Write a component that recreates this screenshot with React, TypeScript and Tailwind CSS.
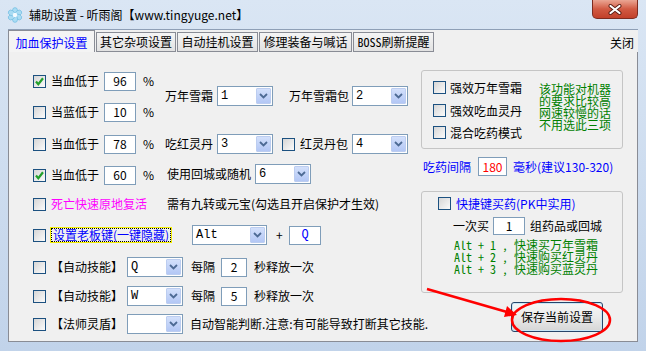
import * as React from "react";

// 小控件：复选框 / 文本框 / 下拉框，仿 Win7 经典样式
function CheckBox({ checked = false, className = "" }: { checked?: boolean; className?: string }) {
  return (
    <span
      className={`flex h-[13px] w-[13px] shrink-0 items-center justify-center border border-[#1c5180] bg-gradient-to-br from-[#d6d6d6] to-[#fbfbfb] ${className}`}
    >
      {checked && (
        <svg width="11" height="11" viewBox="0 0 11 11">
          <path d="M2 5.5 L4.3 8.2 L9 2.3" fill="none" stroke="#23a02c" strokeWidth="2.2" />
        </svg>
      )}
    </span>
  );
}

function TextBox({ children, className = "" }: { children?: React.ReactNode; className?: string }) {
  return (
    <span
      className={`flex shrink-0 items-center justify-center border border-[#7f9db9] bg-white leading-none ${className}`}
    >
      {children}
    </span>
  );
}

function Combo({ value = "", className = "" }: { value?: string; className?: string }) {
  return (
    <span
      className={`flex h-[20px] shrink-0 items-center justify-between border border-[#7f9db9] bg-white pl-[3px] pr-[1px] leading-none ${className}`}
    >
      <span className="font-['Liberation_Mono',monospace] text-[12px]">{value}</span>
      <span className="flex h-[16px] w-[15px] items-center justify-center rounded-[1px] border border-[#bccdf0] bg-gradient-to-b from-[#d3e0fb] to-[#b3c7f5]">
        <svg width="9" height="6" viewBox="0 0 9 6">
          <path d="M1 1 L4.5 4.5 L8 1" fill="none" stroke="#4d6a94" strokeWidth="1.8" />
        </svg>
      </span>
    </span>
  );
}

function TitleIcon() {
  return (
    <svg width="16" height="16" viewBox="0 0 16 16">
      {[0, 60, 120, 180, 240, 300].map((a) => (
        <ellipse
          key={a}
          cx="8"
          cy="4"
          rx="2.6"
          ry="3.4"
          fill="#a9dcf3"
          stroke="#6ab9e0"
          strokeWidth="0.6"
          transform={`rotate(${a} 8 8)`}
        />
      ))}
      <circle cx="8" cy="8" r="2.2" fill="#f4fbff" />
    </svg>
  );
}

function CloseBox() {
  return (
    <div className="ml-auto mr-[8px] flex h-[19px] w-[46px] items-center justify-center self-start rounded-b-[5px] border border-t-0 border-[#7d2c20] bg-gradient-to-b from-[#eaa593] via-[#d15a43] to-[#c2402a]">
      <svg width="14" height="11" viewBox="0 0 14 11">
        <path d="M2.5 2 L11.5 9 M11.5 2 L2.5 9" stroke="#5a1d14" strokeWidth="4" strokeLinecap="round" />
        <path d="M2.5 2 L11.5 9 M11.5 2 L2.5 9" stroke="#ffffff" strokeWidth="2.2" strokeLinecap="round" />
      </svg>
    </div>
  );
}

export default function App() {
  const row = "flex h-[20px] items-center whitespace-nowrap";
  const mono = "font-['Noto_Sans_Mono_CJK_SC','Liberation_Mono',monospace]";

  return (
    <div className="relative h-[351px] w-[646px] overflow-hidden bg-gradient-to-b from-[#dae6f4] to-[#c1d3ea] font-['Noto_Sans_CJK_SC','Liberation_Sans',sans-serif] text-[12px] leading-[14px] text-black">
      {/* 标题栏 */}
      <div className="flex h-[29px] items-center pl-[7px]">
        <TitleIcon />
        <span className="ml-[6px]">辅助设置 - 听雨阁【www.tingyuge.net】</span>
        <CloseBox />
      </div>

      {/* 客户区 */}
      <div className="ml-[8px] flex h-[313px] w-[630px] flex-col border-t border-[#8e9fb6] bg-[#f0f0f0]">
        {/* 选项卡 */}
        <div className="flex h-[22px] items-end">
          <div className="flex h-[22px] w-[87px] items-center justify-center border-x border-t border-[#898c95] bg-[#f4f4f4] pt-[2px] text-[#0000ff]">
            加血保护设置
          </div>
          {[
            ["其它杂项设置", "w-[80px]"],
            ["自动挂机设置", "w-[81px]"],
            ["修理装备与喊话", "w-[93px]"],
          ].map(([t, w]) => (
            <div
              key={t}
              className={`ml-[1px] flex h-[20px] items-center justify-center border border-[#898c95] bg-gradient-to-b from-[#f5f5f5] to-[#e2e2e2] ${w}`}
            >
              {t}
            </div>
          ))}
          <div
            className={`ml-[1px] flex h-[20px] w-[81px] items-center justify-center border border-[#898c95] bg-gradient-to-b from-[#f5f5f5] to-[#e2e2e2] ${mono}`}
          >
            BOSS刷新提醒
          </div>
          <div className="flex h-full flex-1 items-center justify-end pr-[4px] pt-[4px]">关闭</div>
        </div>

        {/* 选项卡内容 */}
        <div className="flex flex-1 border-x border-b border-[#898c95]">
          {/* 左侧 */}
          <div className="flex w-[412px] shrink-0 flex-col pl-[24px] pt-[19px]">
            <div className="flex">
              <div className="flex w-[132px] shrink-0 flex-col">
                <div className={row}>
                  <CheckBox checked />
                  <span className="ml-[5px] w-[48px]">当血低于</span>
                  <TextBox className="ml-[5px] h-[19px] w-[32px]">96</TextBox>
                  <span className="ml-[7px]">%</span>
                </div>
                <div className={`${row} mt-[11px]`}>
                  <CheckBox />
                  <span className="ml-[5px] w-[48px]">当蓝低于</span>
                  <TextBox className="ml-[5px] h-[19px] w-[32px]">10</TextBox>
                  <span className="ml-[7px]">%</span>
                </div>
                <div className={`${row} mt-[12px]`}>
                  <CheckBox />
                  <span className="ml-[5px] w-[48px]">当血低于</span>
                  <TextBox className="ml-[5px] h-[19px] w-[32px]">78</TextBox>
                  <span className="ml-[7px]">%</span>
                </div>
                <div className={`${row} mt-[11px]`}>
                  <CheckBox checked />
                  <span className="ml-[5px] w-[48px]">当血低于</span>
                  <TextBox className="ml-[5px] h-[19px] w-[32px]">60</TextBox>
                  <span className="ml-[7px]">%</span>
                </div>
              </div>

              <div className="flex flex-col">
                <div className={`${row} mt-[15px]`}>
                  <span className="w-[48px]">万年雪霜</span>
                  <Combo value="1" className="ml-[4px] w-[56px]" />
                  <span className="ml-[16px] w-[60px]">万年雪霜包</span>
                  <Combo value="2" className="ml-[3px] w-[56px]" />
                </div>
                <div className={`${row} mt-[28px]`}>
                  <span className="w-[48px]">吃红灵丹</span>
                  <Combo value="3" className="ml-[4px] w-[56px]" />
                  <CheckBox className="ml-[9px]" />
                  <span className="ml-[5px] w-[48px]">红灵丹包</span>
                  <Combo value="4" className="ml-[4px] w-[56px]" />
                </div>
                <div className={`${row} mt-[10px]`}>
                  <span className="ml-[2px] w-[84px]">使用回城或随机</span>
                  <Combo value="6" className="ml-[4px] w-[56px]" />
                </div>
              </div>
            </div>

            <div className={`${row} mt-[9px]`}>
              <CheckBox />
              <span className="ml-[5px] w-[96px] text-[#ff00ff]">死亡快速原地复活</span>
              <span className="ml-[20px]">需有九转或元宝(勾选且开启保护才生效)</span>
            </div>

            <div className={`${row} mt-[11px]`}>
              <CheckBox />
              <span className="ml-[5px] flex h-[14px] w-[120px] items-center border border-dotted border-black pl-[1px] text-[#0000ff] outline outline-1 outline-[#f5f000]">
                设置老板键(一键隐藏)
              </span>
              <Combo value="Alt" className="ml-[21px] w-[75px]" />
              <span className="ml-[9px] w-[6px]">+</span>
              <TextBox className="ml-[7px] h-[19px] w-[32px] font-['Liberation_Mono',monospace] text-[#0000ff]">Q</TextBox>
            </div>

            <div className={`${row} mt-[12px]`}>
              <CheckBox />
              <span className="ml-[5px] w-[72px]">【自动技能】</span>
              <Combo value="Q" className="ml-[4px] w-[56px]" />
              <span className="ml-[8px]">每隔</span>
              <TextBox className="ml-[6px] h-[19px] w-[26px]">2</TextBox>
              <span className="ml-[7px]">秒释放一次</span>
            </div>
            <div className={`${row} mt-[9px]`}>
              <CheckBox />
              <span className="ml-[5px] w-[72px]">【自动技能】</span>
              <Combo value="W" className="ml-[4px] w-[56px]" />
              <span className="ml-[8px]">每隔</span>
              <TextBox className="ml-[6px] h-[19px] w-[26px]">5</TextBox>
              <span className="ml-[7px]">秒释放一次</span>
            </div>
            <div className={`${row} mt-[8px]`}>
              <CheckBox />
              <span className="ml-[5px] w-[72px]">【法师灵盾】</span>
              <Combo className="ml-[4px] w-[56px]" />
              <span className="ml-[7px]">自动智能判断.注意:有可能导致打断其它技能.</span>
            </div>
          </div>

          {/* 右侧 */}
          <div className="flex w-[202px] shrink-0 flex-col whitespace-nowrap">
            <div className="mt-[18px] flex h-[79px] rounded-[3px] border border-[#c5c5c5]">
              <div className="flex flex-col pl-[11px] pt-[10px]">
                {["强效万年雪霜", "强效吃血灵丹", "混合吃药模式"].map((t, i) => (
                  <div
                    key={t}
                    className={`flex h-[13px] items-center ${i === 1 ? "mt-[10px]" : i === 2 ? "mt-[9px]" : ""}`}
                  >
                    <CheckBox />
                    <span className="ml-[4px]">{t}</span>
                  </div>
                ))}
              </div>
              <div className="ml-auto mr-[11px] mt-[12px] flex w-[72px] flex-col leading-[12px] text-[#008000]">
                <span>该功能对机器</span>
                <span>的要求比较高</span>
                <span>网速较慢的话</span>
                <span>不用选此三项</span>
              </div>
            </div>

            <div className="mt-[8px] flex h-[19px] items-center text-[#0000ff]">
              <span className="ml-[2px] w-[48px]">吃药间隔</span>
              <TextBox className="ml-[7px] h-[19px] w-[29px] text-[#ff0000]">180</TextBox>
              <span className="ml-[6px]">毫秒(建议130-320)</span>
            </div>

            <div className="mt-[15px] flex h-[102px] flex-col rounded-[3px] border border-[#c5c5c5]">
              <div className="ml-[16px] mt-[5px] flex h-[13px] items-center">
                <CheckBox />
                <span className="ml-[5px] text-[#0000ff]">快捷键买药(PK中实用)</span>
              </div>
              <div className="mt-[7px] flex h-[18px] items-center pl-[31px]">
                <span className="w-[36px]">一次买</span>
                <TextBox className="ml-[4px] h-[18px] w-[32px]">1</TextBox>
                <span className="ml-[5px]">组药品或回城</span>
              </div>
              <div className={`mt-[4px] flex flex-col whitespace-pre pl-[32px] leading-[12px] text-[#008000] ${mono}`}>
                <span>Alt + 1 , 快速买万年雪霜</span>
                <span>Alt + 2 , 快速购买红灵丹</span>
                <span>Alt + 3 , 快速购买蓝灵丹</span>
              </div>
            </div>

            <button className="ml-[90px] mt-[9px] flex h-[30px] w-[92px] items-center justify-center rounded-[3px] border border-[#27456a] bg-gradient-to-b from-[#f6f6f6] via-[#ebebeb] to-[#d6d6d6] shadow-[inset_0_0_0_1px_#c9e6f7]">
              保存当前设置
            </button>
          </div>
        </div>
      </div>

      {/* 红色标注 */}
      <svg className="pointer-events-none absolute left-0 top-0" width="646" height="351" viewBox="0 0 646 351">
        <ellipse cx="561" cy="320" rx="49" ry="21" fill="none" stroke="#ff0000" strokeWidth="2.5" />
        <line x1="427" y1="289" x2="507" y2="312" stroke="#ff0000" strokeWidth="2.5" />
        <polygon points="517,315 504,317 507,306" fill="#ff0000" />
      </svg>
    </div>
  );
}
